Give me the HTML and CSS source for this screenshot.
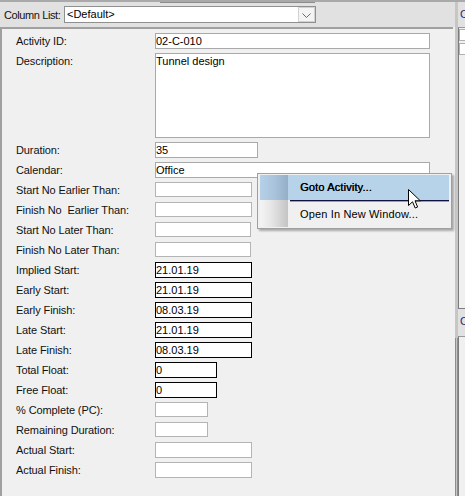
FILE: index.html
```html
<!DOCTYPE html>
<html>
<head>
<meta charset="utf-8">
<link rel="stylesheet" href="styles.css">
</head>
<body>
<div class="screen">
  <div class="main">
    <div class="toolbar">
      <span class="grip"></span>
      <span class="tb-label">Column List:</span>
      <div class="combo">
        <span class="combo-text">&lt;Default&gt;</span>
        <span class="combo-btn"><svg width="9" height="6" viewBox="0 0 9 6"><polyline points="0.5,0.5 4.5,4.5 8.5,0.5" fill="none" stroke="#6a6a6a" stroke-width="1"/></svg></span>
      </div>
    </div>
    <div class="panel">
      <div class="form">
        <span class="lbl">Activity ID:</span><div class="fld w275">02-C-010</div>
        <span class="lbl">Description:</span><div class="fld w275 tall">Tunnel design</div>
        <span class="lbl">Duration:</span><div class="fld w103">35</div>
        <span class="lbl">Calendar:</span><div class="fld w275">Office</div>
        <span class="lbl">Start No Earlier Than:</span><div class="fld light w97 h15"></div>
        <span class="lbl">Finish No  Earlier Than:</span><div class="fld light w97 h15"></div>
        <span class="lbl">Start No Later Than:</span><div class="fld light w96 h15"></div>
        <span class="lbl">Finish No Later Than:</span><div class="fld light w96 h15"></div>
        <span class="lbl">Implied Start:</span><div class="fld dark w97">21.01.19</div>
        <span class="lbl">Early Start:</span><div class="fld dark w97">21.01.19</div>
        <span class="lbl">Early Finish:</span><div class="fld dark w97">08.03.19</div>
        <span class="lbl">Late Start:</span><div class="fld dark w97">21.01.19</div>
        <span class="lbl">Late Finish:</span><div class="fld dark w97">08.03.19</div>
        <span class="lbl">Total Float:</span><div class="fld dark w62">0</div>
        <span class="lbl">Free Float:</span><div class="fld dark w62">0</div>
        <span class="lbl">% Complete (PC):</span><div class="fld light w53 h15"></div>
        <span class="lbl">Remaining Duration:</span><div class="fld light w53 h15"></div>
        <span class="lbl">Actual Start:</span><div class="fld light w97"></div>
        <span class="lbl">Actual Finish:</span><div class="fld light w97"></div>
      </div>
    </div>
  </div>
  <div class="splitter">
    <div class="split-top"></div>
    <div class="split-bottom"></div>
  </div>
  <div class="side">
    <div class="side-head">C</div>
    <div class="side-box upper">
      <div class="side-row"></div>
      <div class="side-row"></div>
    </div>
    <div class="side-head second">C</div>
    <div class="side-box lower"></div>
  </div>
</div>

<div class="menu">
  <div class="mi active"><span class="mi-icon"></span><span class="mi-text strong">Goto Activity...</span></div>
  <div class="mi-sep"><span class="mi-icon"></span><span class="sep-line"></span></div>
  <div class="mi"><span class="mi-icon"></span><span class="mi-text">Open In New Window...</span></div>
</div>

<svg class="cursor" width="14" height="21" viewBox="0 0 14 21">
  <path d="M0.5,0.5 L0.5,16.5 L4.5,12.8 L7.2,19 L9.6,18 L7,11.8 L12.3,11.8 Z" fill="#fff" stroke="#000" stroke-width="1" stroke-linejoin="miter"/>
</svg>
</body>
</html>
```

FILE: styles.css
```css
* { box-sizing: border-box; }
html, body { margin: 0; padding: 0; }
body {
  position: relative;
  width: 465px;
  height: 496px;
  overflow: hidden;
  background: #f0f0f0;
  font-family: "Liberation Sans", Arial, sans-serif;
  font-size: 11px;
  color: #000;
}
.screen {
  display: flex;
  width: 465px;
  height: 496px;
  border-top: 2px solid #a9a9a9;
}
.main {
  width: 455px;
  display: flex;
  flex-direction: column;
  background: #f0f0f0;
}
.toolbar {
  position: relative;
  height: 25px;
  background: #e1e1e1;
  display: flex;
  align-items: center;
  padding-left: 4px;
  flex-shrink: 0;
}
.grip {
  position: absolute;
  left: 160px;
  top: 0;
  width: 155px;
  height: 1px;
  background: #8c8c8c;
}
.tb-label {
  width: 60px;
  flex-shrink: 0;
  white-space: nowrap;
  letter-spacing: -0.4px;
  line-height: 14px;
  color: #111;
}
.combo {
  width: 252px;
  height: 17px;
  flex-shrink: 0;
  border: 1px solid #8f8f8f;
  background: #fff;
  display: flex;
  align-items: center;
}
.combo-text {
  flex: 1;
  padding-left: 2px;
  line-height: 15px;
  white-space: nowrap;
}
.combo-btn {
  width: 17px;
  height: 15px;
  border: 1px solid #d2d2d2;
  background: #f4f4f4;
  display: flex;
  align-items: center;
  justify-content: center;
  padding-top: 2px;
}
.panel {
  width: 453px;
  flex: 1;
  border-left: 2px solid #a0a0a0;
  border-top: 2px solid #a0a0a0;
  padding: 4px 0 0 14px;
}
.form {
  display: grid;
  grid-template-columns: 139px auto;
  row-gap: 4px;
  align-items: start;
  justify-items: start;
}
.lbl {
  line-height: 16px;
  height: 16px;
  white-space: pre;
  letter-spacing: -0.1px;
  color: #111;
}
.fld {
  height: 16px;
  border: 1px solid #a9a9a9;
  background: #fff;
  line-height: 14px;
  white-space: nowrap;
  overflow: hidden;
}
.fld.light { border-color: #b4b4b4; }
.fld.dark { border-color: #000; }
.fld.tall { height: 85px; }
.fld.h15 { height: 15px; }
.w275 { width: 275px; }
.w103 { width: 103px; }
.w97 { width: 97px; }
.w96 { width: 96px; }
.w62 { width: 62px; }
.w53 { width: 53px; }

.splitter {
  width: 3px;
  display: flex;
  flex-direction: column;
  background: #c6c6c6;
}
.split-top { height: 336px; }
.split-bottom {
  flex: 1;
  border-left: 1px solid #8e8e8e;
  border-right: 1px solid #8e8e8e;
}
.side {
  width: 7px;
  display: flex;
  flex-direction: column;
  overflow: hidden;
}
.side-head {
  height: 25px;
  background: #e1e1e1;
  padding-left: 2px;
  line-height: 25px;
  color: #1d2a7a;
  flex-shrink: 0;
  white-space: nowrap;
  overflow: hidden;
}
.side-head.second { height: 27px; }
.side-box {
  border-left: 1px solid #7c7c7c;
  border-top: 1px solid #9a9a9a;
  background: #f0f0f0;
  flex-shrink: 0;
}
.side-box.upper {
  height: 282px;
  border-bottom: 1px solid #7c7c7c;
  padding-top: 1px;
}
.side-box.lower { flex: 1; }
.side-row {
  height: 12px;
  margin-bottom: 2px;
  background: #fff;
  border: 1px solid #b0b0b0;
  border-right: none;
}

.menu {
  position: absolute;
  left: 257px;
  top: 173px;
  width: 195px;
  height: 56px;
  background: #f0f0f0;
  border: 1px solid #a0a0a0;
  padding: 1px 2px 1px 2px;
  box-shadow: 2px 2px 2px rgba(0, 0, 0, 0.3);
  display: flex;
  flex-direction: column;
}
.mi {
  height: 25px;
  display: flex;
  align-items: stretch;
}
.mi.active { background: #b7d3ea; }
.mi-icon {
  width: 28px;
  flex-shrink: 0;
  background: linear-gradient(to right, #f4f4f4, #e6e6e6 40%, #c4c4c4);
}
.mi.active .mi-icon {
  background: linear-gradient(to right, #b5d0e7, #a9c4dc 50%, #93aec5);
}
.mi-text {
  padding-left: 12px;
  line-height: 25px;
  letter-spacing: 0.15px;
  color: #000;
  white-space: nowrap;
}
.mi-text.strong { text-shadow: 0.4px 0 0 #000; }
.mi-sep {
  height: 2px;
  display: flex;
}
.sep-line {
  flex: 1;
  margin-left: 2px;
  border-top: 1px solid #12123e;
  border-bottom: 1px solid #9c9cb4;
}
.mi:last-child { height: 26px; }

.cursor {
  position: absolute;
  left: 408px;
  top: 189px;
}
```
